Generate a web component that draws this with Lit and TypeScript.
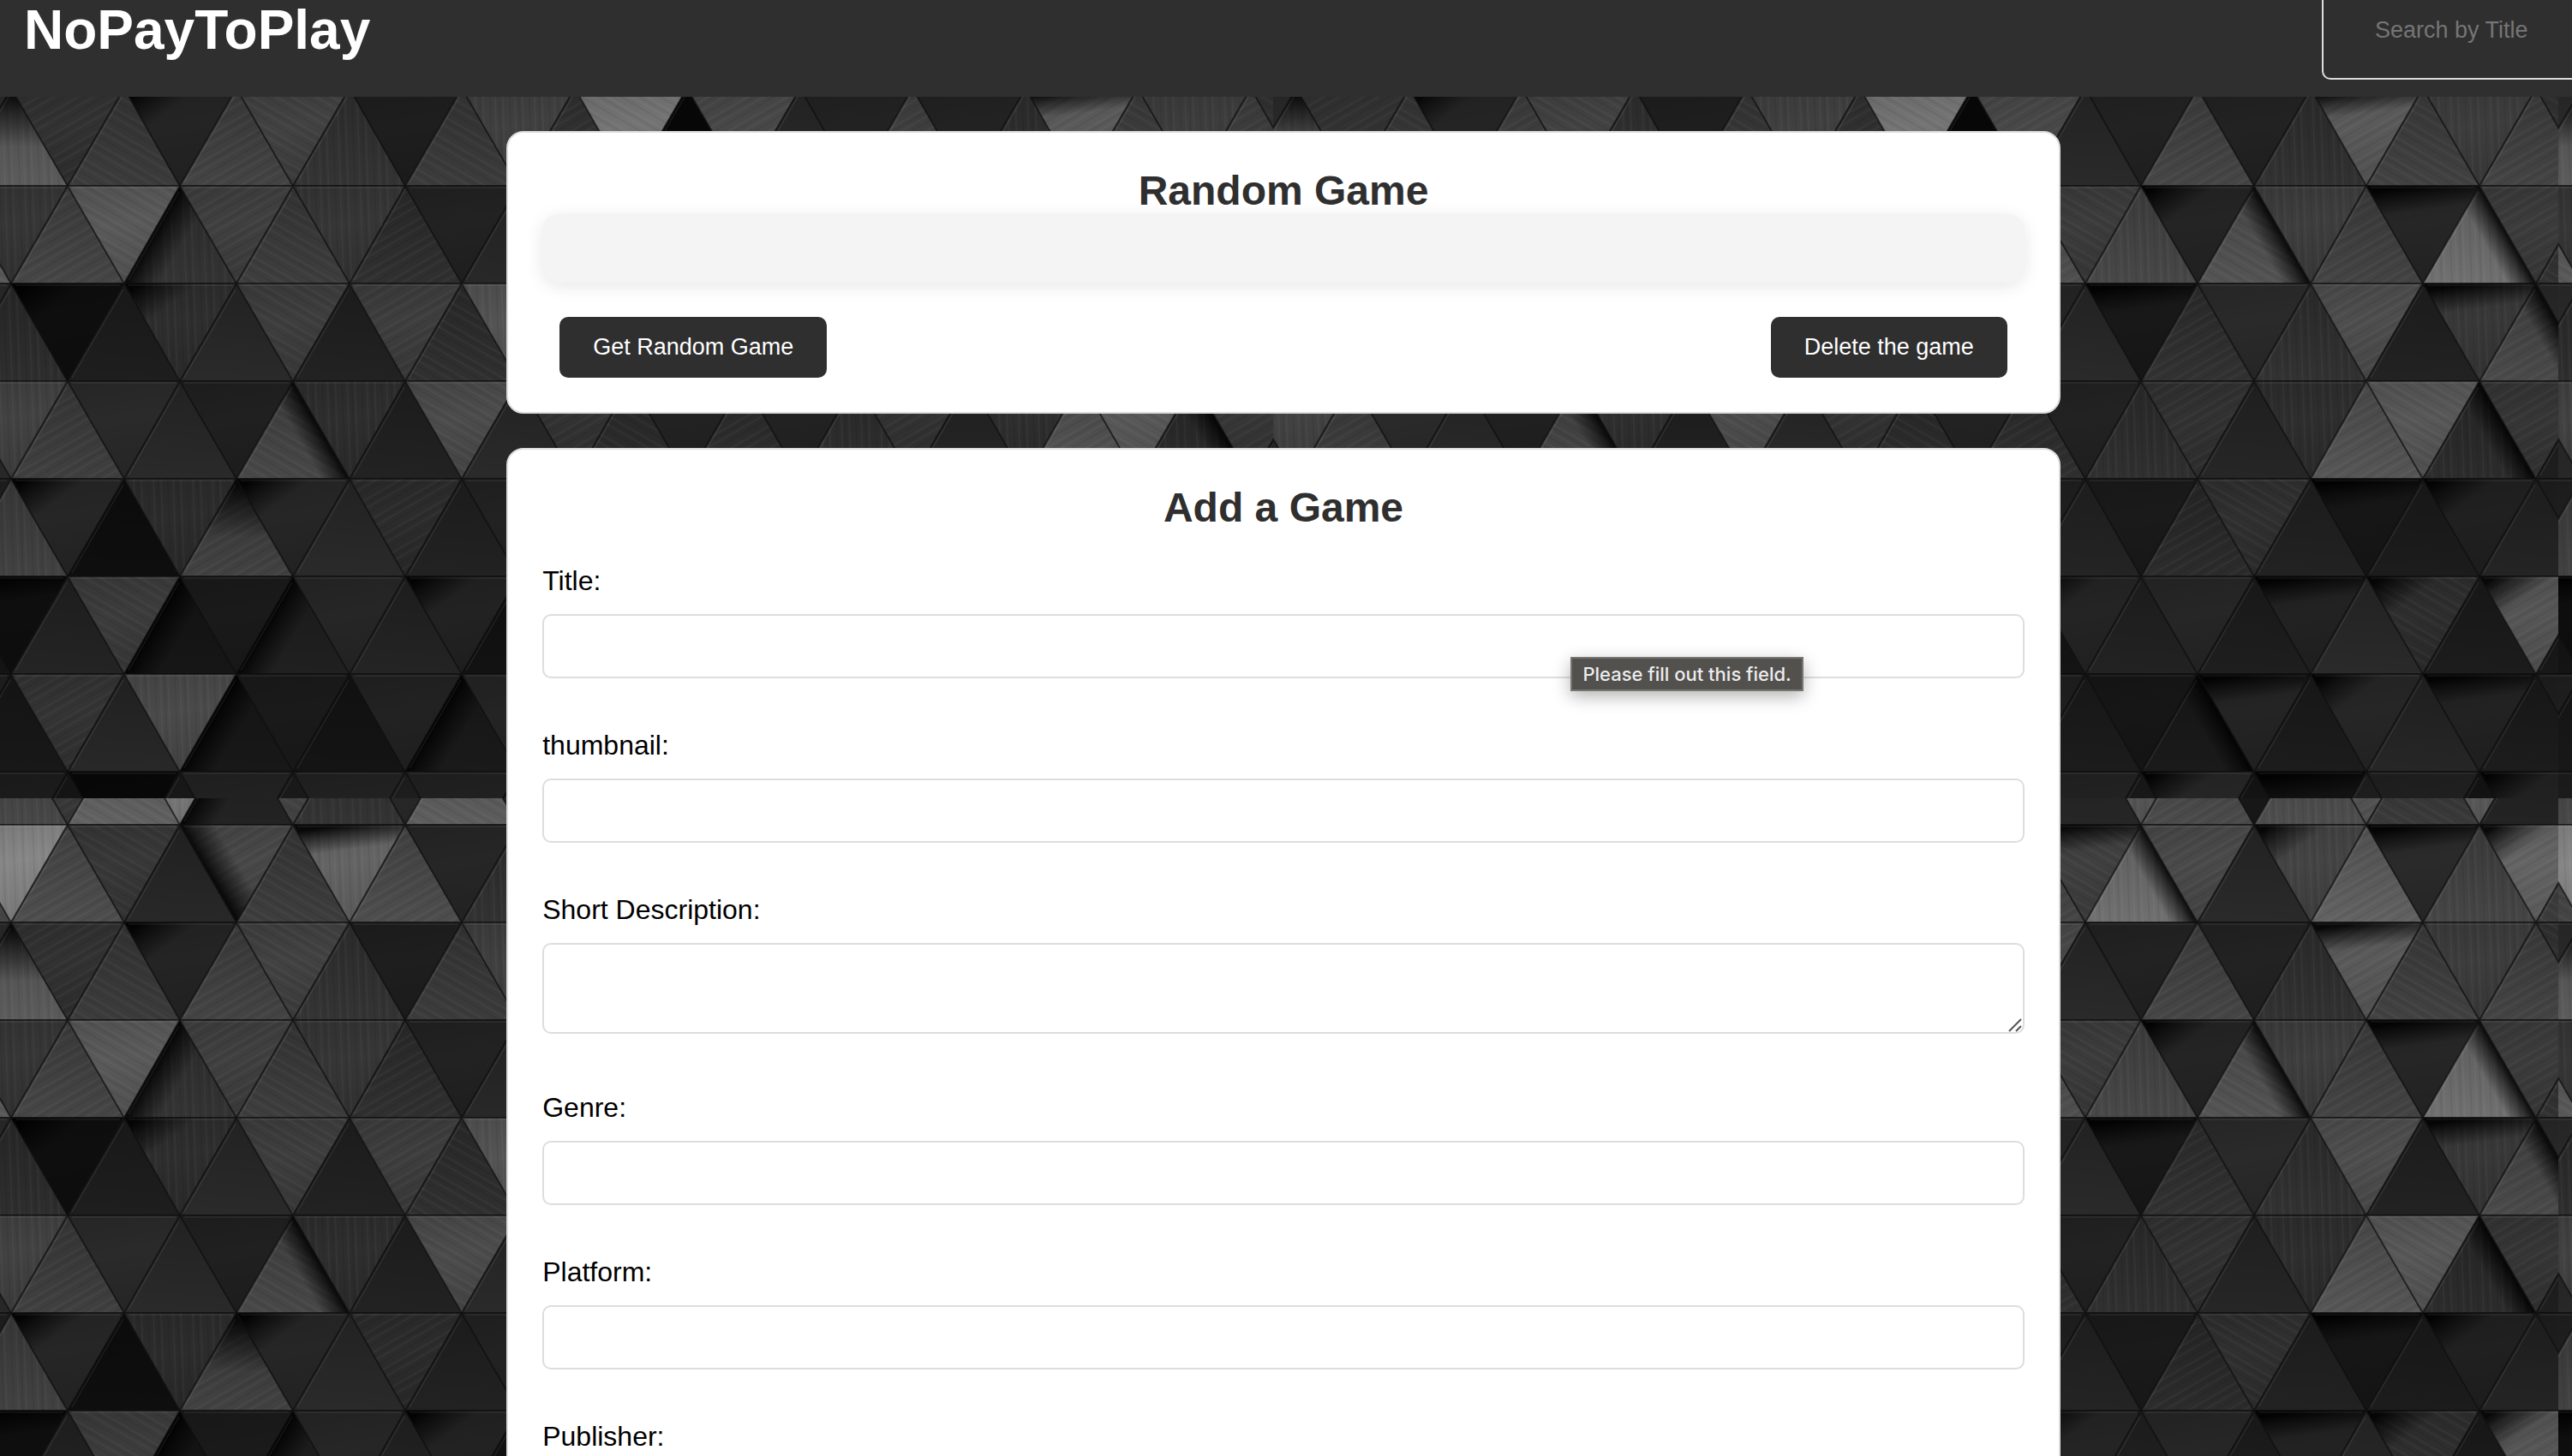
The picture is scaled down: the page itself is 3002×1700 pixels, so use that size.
import { LitElement, html, svg, css } from "lit";
import { customElement } from "lit/decorators.js";

/*
 * Backdrop tile: ten rows of interlocking triangles, listed left to right.
 * Each entry is a grey level, optionally followed by the side its shadow falls from:
 * l = left edge, r = right edge, t = top, c = top-left corner.
 */
const ROWS: string[] = [
  "90 72 60 98 125 35l 72 52 42 94 40 50 60 44 70 38 90 75 25 78 88 58 94 35 50",
  "70 134 78 56 40 72l 62 100t 78 38 50 60 48 72 70 64t 112r 74 42 68c 98 42t 70 100c 60",
  "40 92t 50 60 36c 68 66 52 30 60 64 54 116 8 72 42 34 70 34 50 90t 66 61 68 50",
  "90 54 70 90 52l 64 62 54 48 34 40 50 60 45 80 60 72 36c 84r 62 68 38t 112r 60 50",
  "40 46 14c 30 46c 42 62 34 62 48 84 50 40 60 36 42 24t 50 42 50 78 34 56t 74r 40",
  "40 66 64 42 42 32 72r 46 34 76 42 50 46 34 48 34 48 50 38 46 86 88 44r 54 30",
  "30 66 38c 14 44 66t 38c 42 44 34 34 34 30 40 30 36 26 44 48 34 22t 28 32c 36 30",
  "20 14t 36 60 22l 26 32l 38 36 34c 18 30 34 26 20 36c 34 38 30 34t 42 46c 28 86c 24",
  "30 24 52 40 74 24l 26 20 34 26l 36 30 22 28 30 28 22 26r 36t 28 38c 38 34t 28 30",
  "24 28 24 8 28 34 30 34 34 33 26 30 22 30 34 34 28 38c 22 18t 34 32 22 34c 30",
];

const TILE_W = 1500;
const TILE_H = 974;
const ROW_H = 114;
const FIRST_LINE = 31;

const lineY = (i: number) => FIRST_LINE + i * ROW_H;
const vertexX = (h: number) => Math.round(27 + 65.75 * h);

function triangle(row: number, index: number, cell: string) {
  const h = index - 1;
  const grey = parseInt(cell, 10);
  const side = cell.replace(/\d+/, "");
  const pointsDown = (Math.abs(h) % 2 === 1) === (row % 2 === 0);
  const top = lineY(row - 1);
  const bottom = lineY(row);
  const left = vertexX(h - 1);
  const right = vertexX(h + 1);
  const mid = vertexX(h);
  const points = pointsDown
    ? `${left},${top} ${right},${top} ${mid},${bottom}`
    : `${left},${bottom} ${right},${bottom} ${mid},${top}`;
  const dir = pointsDown ? "down" : "up";
  const grainId = grey < 44 ? "" : `grain${(row * 3 + index * 2) % 3}`;
  return svg`
    <polygon points=${points} fill=${`rgb(${grey},${grey},${grey})`}></polygon>
    <polygon points=${points} fill=${`url(#${dir}-shade)`}></polygon>
    ${grainId ? svg`<polygon points=${points} fill=${`url(#${grainId})`}></polygon>` : ""}
    ${side ? svg`<polygon points=${points} fill=${`url(#${dir}-${side})`}></polygon>` : ""}
    <polygon class="seam" points=${points}></polygon>
    ${pointsDown
      ? svg`<path class="glint" d=${`M${left + 5} ${top + 2}H${right - 5}`}></path>`
      : svg`<path class="glint" d=${`M${mid - 1} ${top + 7}L${left + 5} ${bottom - 4}`}></path>`}
  `;
}

const shadow = (id: string, x1: number, y1: number, x2: number, y2: number) => svg`
  <linearGradient id=${id} x1=${x1} y1=${y1} x2=${x2} y2=${y2}>
    <stop offset="0" stop-color="#000" stop-opacity="0.9"></stop>
    <stop offset="0.35" stop-color="#000" stop-opacity="0.55"></stop>
    <stop offset="1" stop-color="#000" stop-opacity="0"></stop>
  </linearGradient>`;

const grain = (id: string, angle: number) => svg`
  <pattern id=${id} width="40" height="23" patternUnits="userSpaceOnUse" patternTransform=${`rotate(${angle})`}>
    <path d="M0 3H40M0 12H40" stroke="#fff" stroke-opacity="0.03" stroke-width="2"></path>
    <path d="M0 7H40M0 18H40" stroke="#000" stroke-opacity="0.06" stroke-width="2"></path>
  </pattern>`;

@customElement("triangle-backdrop")
export class TriangleBackdrop extends LitElement {
  static styles = css`
    :host {
      display: block;
    }
    .canvas {
      display: block;
      width: 100%;
      height: 100%;
    }
    .seam {
      fill: none;
      stroke: #0c0c0c;
      stroke-opacity: 0.55;
      stroke-width: 2;
      stroke-linejoin: round;
    }
    .glint {
      fill: none;
      stroke: #fff;
      stroke-opacity: 0.1;
      stroke-width: 1;
    }
  `;

  render() {
    return html`
      <svg class="canvas" aria-hidden="true">
        <defs>
          ${shadow("up-l", 0.25, 0.5, 0.5, 0.63)} ${shadow("up-r", 0.75, 0.5, 0.55, 0.6)}
          ${shadow("up-t", 0.5, 0.05, 0.5, 0.6)} ${shadow("up-c", 0.25, 0.5, 0.48, 0.62)}
          ${shadow("down-l", 0.25, 0.5, 0.5, 0.37)} ${shadow("down-r", 0.75, 0.5, 0.55, 0.4)}
          ${shadow("down-t", 0.48, 0, 0.52, 0.25)} ${shadow("down-c", 0.12, 0.02, 0.34, 0.28)}
          <linearGradient id="up-shade" x1="0.6" y1="0" x2="0.5" y2="1">
            <stop offset="0" stop-color="#000" stop-opacity="0.2"></stop>
            <stop offset="1" stop-color="#000" stop-opacity="0"></stop>
          </linearGradient>
          <linearGradient id="down-shade" x1="0.3" y1="0" x2="0.5" y2="1">
            <stop offset="0" stop-color="#000" stop-opacity="0.1"></stop>
            <stop offset="0.4" stop-color="#000" stop-opacity="0"></stop>
            <stop offset="1" stop-color="#000" stop-opacity="0.12"></stop>
          </linearGradient>
          ${grain("grain0", 30)} ${grain("grain1", -30)} ${grain("grain2", 88)}
          <pattern id="tile" x="-14" y="-42" width=${TILE_W} height=${TILE_H} patternUnits="userSpaceOnUse">
            <rect width=${TILE_W} height=${TILE_H} fill="#222"></rect>
            ${ROWS.map((cells, row) => cells.split(" ").map((cell, i) => triangle(row, i, cell)))}
          </pattern>
        </defs>
        <rect width="100%" height="100%" fill="url(#tile)"></rect>
      </svg>
    `;
  }
}

interface Field {
  id: string;
  label: string;
  multiline?: boolean;
  hint?: string;
}

const FIELDS: Field[] = [
  { id: "title", label: "Title:", hint: "Please fill out this field." },
  { id: "thumbnail", label: "thumbnail:" },
  { id: "description", label: "Short Description:", multiline: true },
  { id: "genre", label: "Genre:" },
  { id: "platform", label: "Platform:" },
  { id: "publisher", label: "Publisher:" },
];

@customElement("app-root")
export class AppRoot extends LitElement {
  static styles = css`
    :host {
      display: block;
      position: relative;
      height: 100vh;
      overflow: hidden;
      font-family: Arial, "Liberation Sans", sans-serif;
      font-size: 32px;
      color: #000;
    }
    * {
      box-sizing: border-box;
    }
    .backdrop {
      position: absolute;
      inset: 0;
    }
    .page {
      position: relative;
    }
    .header {
      display: flex;
      align-items: center;
      justify-content: space-between;
      margin-top: -43px;
      padding: 20px 0 20px 28px;
      background: #2f2f2f;
      overflow: hidden;
    }
    .brand {
      margin: 0;
      font-size: 64px;
      color: #fff;
    }
    .search {
      flex: none;
      width: 292px;
    }
    .search-input {
      width: 400px;
      height: 116px;
      padding: 0 60px;
      border: 2px solid #ddd;
      border-radius: 10px;
      background: transparent;
      font: inherit;
      font-size: 27px;
      color: #fff;
      display: block;
    }
    .search-input::placeholder {
      color: #757575;
    }
    .main {
      display: flex;
      flex-direction: column;
      align-items: center;
      gap: 40px;
      padding: 40px 6px 40px 0;
    }
    .card {
      width: calc(60% + 16px);
      padding: 40px;
      border: 2px solid #ddd;
      border-radius: 20px;
      background: #fff;
    }
    .heading {
      margin: 0;
      font-size: 48px;
      line-height: 55px;
      text-align: center;
      color: #2f2f2f;
    }
    .result {
      height: 80px;
      border-radius: 20px;
      background: #f4f4f4;
      box-shadow: 0 4px 20px rgba(0, 0, 0, 0.1);
    }
    .actions {
      display: flex;
      justify-content: space-between;
      padding: 0 20px;
      margin-top: 40px;
    }
    .button {
      padding: 20px 39px;
      border: 0;
      border-radius: 10px;
      background: #2f2f2f;
      color: #fff;
      font: inherit;
      font-size: 27px;
      line-height: 31px;
    }
    .form {
      display: flex;
      flex-direction: column;
      gap: 60px;
      margin-top: 40px;
    }
    .field {
      position: relative;
      display: flex;
      flex-direction: column;
      gap: 20px;
    }
    .label {
      line-height: 37px;
    }
    .control {
      width: 100%;
      height: 75px;
      padding: 20px;
      border: 2px solid #ddd;
      border-radius: 10px;
      background: #fff;
      font: inherit;
      font-size: 27px;
      display: block;
      outline: none;
    }
    .area {
      height: 106px;
      resize: none;
    }
    .area-box {
      position: relative;
      padding-bottom: 8px;
    }
    .grip {
      position: absolute;
      right: 3px;
      bottom: 10px;
      width: 16px;
      height: 16px;
      fill: none;
      stroke: #555;
      stroke-width: 2;
    }
    .hint {
      position: absolute;
      top: 107px;
      right: 258px;
      padding: 0 12px;
      border: 2px solid #757572;
      background: #52514e;
      box-shadow: 0 6px 20px rgba(0, 0, 0, 0.3);
      color: #ececec;
      font-family: Inter, sans-serif;
      font-size: 22px;
      font-weight: 500;
      line-height: 36px;
      white-space: nowrap;
    }
  `;

  private renderField(field: Field) {
    return html`
      <div class="field">
        <label class="label" for=${field.id}>${field.label}</label>
        ${field.multiline
          ? html`<div class="area-box">
              <textarea class="control area" id=${field.id} required></textarea>
              <svg class="grip" viewBox="0 0 16 16" aria-hidden="true">
                <path d="M1 15L15 1M9 15L15 9"></path>
              </svg>
            </div>`
          : html`<input class="control" id=${field.id} type="text" required />`}
        ${field.hint ? html`<div class="hint" role="tooltip">${field.hint}</div>` : ""}
      </div>
    `;
  }

  render() {
    return html`
      <triangle-backdrop class="backdrop"></triangle-backdrop>
      <div class="page">
        <header class="header">
          <h1 class="brand">NoPayToPlay</h1>
          <form class="search" role="search">
            <input class="search-input" type="text" placeholder="Search by Title" aria-label="Search by Title" />
          </form>
        </header>
        <main class="main">
          <section class="card">
            <h2 class="heading">Random Game</h2>
            <div class="result"></div>
            <div class="actions">
              <button class="button" type="button">Get Random Game</button>
              <button class="button" type="button">Delete the game</button>
            </div>
          </section>
          <section class="card">
            <h2 class="heading">Add a Game</h2>
            <form class="form">${FIELDS.map((field) => this.renderField(field))}</form>
          </section>
        </main>
      </div>
    `;
  }
}
